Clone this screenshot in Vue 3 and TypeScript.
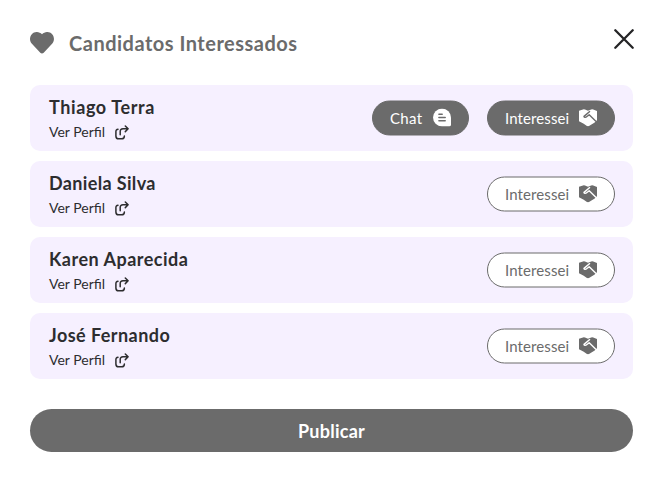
<script setup lang="ts">
interface Candidate {
  name: string
  slug: string
  matched: boolean
}

const candidates: Candidate[] = [
  { name: 'Thiago Terra', slug: 'thiago', matched: true },
  { name: 'Daniela Silva', slug: 'daniela', matched: false },
  { name: 'Karen Aparecida', slug: 'karen', matched: false },
  { name: 'José Fernando', slug: 'jose', matched: false },
]
</script>

<template>
  <main class="dialog">
    <header class="header">
      <svg class="heart" viewBox="0 0 24 22">
        <path d="M12 2.3C14.8-.6 19.2-.8 21.9 1.9c2.7 2.7 2.7 7.1.2 9.9l-8.4 8.9c-1 1-2.4 1-3.4 0L1.900 11.800C-.7 9-.6 4.600 2.100 1.900 4.800-.8 9.200-.6 12 2.300Z" fill="currentColor" />
      </svg>
      <h1 class="title">Candidatos Interessados</h1>
      <button class="close" aria-label="Fechar">
        <svg viewBox="0 0 20 20"><path d="M1.300 1.300 18.700 18.700M18.700 1.300 1.300 18.700" fill="none" stroke="currentColor" stroke-width="2.300" stroke-linecap="round" /></svg>
      </button>
    </header>

    <ul class="list">
      <li v-for="person in candidates" :key="person.slug" class="card">
        <div class="info">
          <h2 class="name" :class="person.slug">{{ person.name }}</h2>
          <a class="profile">
            <span class="profile-text">Ver Perfil</span>
            <svg viewBox="0 0 14 15" fill="none" stroke="currentColor" stroke-width="1.500" stroke-linecap="round" stroke-linejoin="round">
              <path d="M3 4.300C1.500 4.300.9 5.100.9 6.600v4.300c0 2 .7 2.900 2.600 2.900h3.100c2 0 2.800-.9 2.800-2.900M5.200 9.800V6.600c0-1.900.9-2.800 2.800-2.800h4.900M10.300 1l2.800 2.800-2.800 2.800" />
            </svg>
          </a>
        </div>
        <div class="actions">
          <button v-if="person.matched" class="pill filled chat">
            <span class="chat-text">Chat</span>
            <svg viewBox="0 0 18 18">
              <path d="M9 0a9 9 0 0 1 9 9v7.300a1.700 1.700 0 0 1-1.700 1.700H9A9 9 0 0 1 9 0Z" fill="currentColor" />
              <path d="M5.900 5.800h3.300M5.900 9h6.300M5.900 12.200h6.300" fill="none" stroke="#6b6b6b" stroke-width="1.500" stroke-linecap="round" />
            </svg>
          </button>
          <button class="pill" :class="{ filled: person.matched }">
            <span class="interest-text">Interessei</span>
            <svg viewBox="0 0 18 18">
              <path d="M0 2.300 4 1q1-.3 2 .1l3 1.100L12.200.9q1-.5 2 0L18 2.500v9.300l-2.300 2.200L10 17.400q-1 .7-2 0L4.300 14.900 0 12.700Z" fill="currentColor" />
              <path class="handshake-gap" d="M11 2.800 5.300 7.600q-.7.700.1 1.100 1.200.5 2.200-.4l2.600-2.100 6.900 6.700" />
            </svg>
          </button>
        </div>
      </li>
    </ul>

    <button class="publish"><span>Publicar</span></button>
  </main>
</template>

<style>
body { margin: 0; background: #fff; }
</style>

<style scoped>
.dialog {
  box-sizing: border-box;
  width: 663px;
  height: 482px;
  padding: 29px 29px 30px 30px;
  font-family: Lato, "Liberation Sans", sans-serif;
  color: #2d2d2f;
}
button { padding: 0; border: 0; background: none; font: inherit; color: inherit; }
svg { display: block; flex: none; }
h1, h2, ul { margin: 0; padding: 0; }
.header { display: flex; align-items: flex-start; height: 56px; color: #6b6b6b; }
.heart { width: 24px; height: 22px; margin: 3px 15px 0 0; }
.title { font-size: 20px; line-height: 28px; font-weight: 700; letter-spacing: 0.5px; white-space: nowrap; }
.close { margin-left: auto; color: #242426; }
.close svg { width: 20px; height: 20px; }
.list { display: grid; gap: 10px; margin-right: 1px; list-style: none; }
.card {
  box-sizing: border-box;
  display: flex;
  align-items: center;
  justify-content: space-between;
  height: 66px;
  padding: 0 18px;
  border-radius: 10px;
  background: #f6f0ff;
}
.info { padding: 4px 0 0 1px; }
.name { font-size: 18px; line-height: 24px; font-weight: 700; white-space: nowrap; }
.thiago { letter-spacing: 0.6px; }
.daniela { letter-spacing: 0.35px; }
.karen { letter-spacing: 0.5px; }
.jose { letter-spacing: 0.45px; }
.profile { display: flex; align-items: center; height: 26px; }
.profile-text { width: 66px; font-size: 14px; line-height: 20px; white-space: nowrap; }
.profile svg { width: 14px; height: 15px; }
.actions { display: flex; gap: 18px; }
.pill {
  box-sizing: border-box;
  display: flex;
  align-items: center;
  justify-content: space-between;
  width: 128px;
  height: 35px;
  padding: 0 17px;
  border: 1px solid #6b6b6b;
  border-radius: 18px;
  background: #fff;
  color: #6b6b6b;
  font-size: 15px;
  line-height: 20px;
  transform: translateY(-0.5px);
}
.pill.filled { background: #6b6b6b; color: #fff; }
.pill.chat { width: 97px; }
.pill svg { width: 18px; height: 18px; }
.interest-text { letter-spacing: 0.1px; }
.chat-text { letter-spacing: 0.3px; }
.handshake-gap { fill: none; stroke: #fff; stroke-width: 1.4; stroke-linejoin: round; }
.filled .handshake-gap { stroke: #6b6b6b; }
.publish {
  display: block;
  width: 603px;
  height: 43px;
  margin-top: 30px;
  border-radius: 22px;
  background: #6b6b6b;
  color: #fff;
  font-size: 18px;
  font-weight: 700;
  letter-spacing: 0.25px;
}
</style>
